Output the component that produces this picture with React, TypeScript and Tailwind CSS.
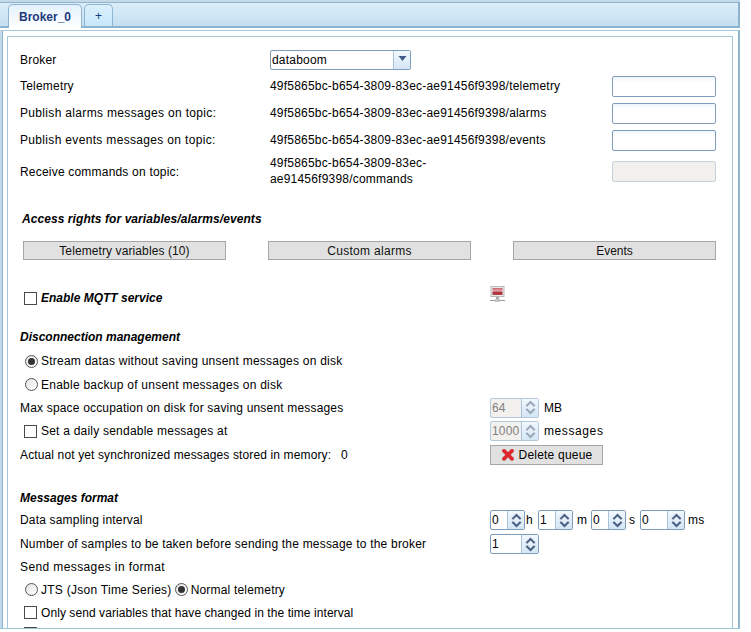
import React from "react";

const font = "font-['Liberation_Sans',Arial,sans-serif]";

function Row({ h, mt = "", children }: { h: string; mt?: string; children: React.ReactNode }) {
  return <div className={`flex items-center ${h} ${mt}`}>{children}</div>;
}

function Check() {
  return <span className="inline-block w-[13px] h-[13px] shrink-0 border border-[#4a4a4a] bg-white" />;
}

function Radio({ on }: { on?: boolean }) {
  return (
    <span className="flex items-center justify-center w-[13px] h-[13px] shrink-0 rounded-full border border-[#555] bg-gradient-to-br from-[#e4e4e4] to-white">
      {on && <span className="block w-[7px] h-[7px] rounded-full bg-[#333]" />}
    </span>
  );
}

function Arrows({ disabled }: { disabled?: boolean }) {
  const c = disabled ? "#9aa8ba" : "#4d6185";
  return (
    <svg width="11" height="15" viewBox="0 0 11 15">
      <path d="M5.5 0.5 L10.5 5.5 L8.8 6.8 L5.5 3.6 L2.2 6.8 L0.5 5.5 Z" fill={c} />
      <path d="M5.5 14.5 L10.5 9.5 L8.8 8.2 L5.5 11.4 L2.2 8.2 L0.5 9.5 Z" fill={c} />
    </svg>
  );
}

function Spinner({ value, w, disabled }: { value: string; w: string; disabled?: boolean }) {
  return (
    <span
      className={`flex h-[20px] ${w} rounded-[2px] border ${
        disabled ? "border-[#b4c8dc] bg-[#f3f1ee] text-[#808080]" : "border-[#7f9db9] bg-white text-black"
      }`}
    >
      <span className="flex-1 pl-[1px] leading-[18px] overflow-hidden">{value}</span>
      <span className="flex items-center justify-center w-[17px] border-l border-[#a9c3dc] bg-gradient-to-b from-[#f2f8fd] to-[#d4e6f5]">
        <Arrows disabled={disabled} />
      </span>
    </span>
  );
}

function TextBox({ disabled }: { disabled?: boolean }) {
  return (
    <span
      className={`block w-[104px] h-[21px] rounded-[2px] border ${
        disabled ? "border-[#c5d3de] bg-[#f2f0ed]" : "border-[#7f9db9] bg-gradient-to-b from-[#eef7ff] to-white to-30%"
      }`}
    />
  );
}

function GreyButton({ label, tracking }: { label: string; tracking: string }) {
  return (
    <button className={`w-[203px] h-[19px] border border-[#a6a6a6] bg-[#e1e1e1] text-[12px] leading-[16px] text-[#111] ${tracking}`}>
      {label}
    </button>
  );
}

function TopicRow({ h, label, topic, tracking = "" }: { h: string; label: string; topic: string; tracking?: string }) {
  return (
    <Row h={h}>
      <span className={`w-[250px] mb-[2px] ${tracking}`}>{label}</span>
      <span className="w-[342px] mb-[2px]">{topic}</span>
      <TextBox />
    </Row>
  );
}

function Heading({ children }: { children: React.ReactNode }) {
  return <span className="font-bold italic tracking-normal">{children}</span>;
}

export default function App() {
  return (
    <div className={`${font} w-[751px] h-[632px] overflow-hidden bg-white text-[12px] tracking-[0.2px] text-black`}>
      <div className="h-[629px] w-[740px] flex flex-col border-b border-[#9cc6d8]">
        {/* Tab strip */}
        <div className="h-[2px] bg-[#c3d9e7]" />
        <div className="flex items-end h-[26px] pl-[8px] gap-[2px] border-t border-[#8fb4d0] border-b-[2px] border-b-[#8db3cf] border-r-[2px] border-r-[#8fb4d0] bg-gradient-to-b from-[#dcedf8] to-[#c4e0f3]">
          <div className="flex items-center justify-center w-[74px] h-[24px] -mb-[2px] rounded-t-[5px] border border-b-0 border-[#8fb4d0] bg-gradient-to-b from-[#e3f1fb] to-white font-bold tracking-normal text-[#1c3a7a]">
            Broker_0
          </div>
          <div className="flex items-center justify-center w-[29px] h-[22px] rounded-t-[5px] border border-b-0 border-[#8fb4d0] bg-gradient-to-b from-[#dcf0fc] to-[#c6e8fb] text-[#1c3a7a]">
            +
          </div>
        </div>

        {/* Tab body */}
        <div className="flex-1 min-h-0 mt-[2px] border-l-[2px] border-l-[#c3d9e7]">
          <div className="h-full border-l border-l-[#8fb4d0] border-r-[2px] border-r-[#8fb4d0] border-t border-t-[#a6c9da] pl-[4px] pt-[5px]">
            <div className="h-full w-[726px] overflow-hidden border border-b-0 border-[#a6c9da] pl-[12px] pt-[10px]">
              <Row h="h-[26px]">
                <span className="w-[250px]">Broker</span>
                <span className="flex w-[141px] h-[20px] rounded-[2px] border border-[#7f9db9]">
                  <span className="flex-1 pl-[1px] leading-[18px]">databoom</span>
                  <span className="flex items-center justify-center w-[17px] border-l border-[#a9c3dc] bg-gradient-to-b from-[#f2f8fd] to-[#d4e6f5]">
                    <svg width="9" height="5" viewBox="0 0 9 5" className="-mt-[3px]">
                      <path d="M0.5 0 H8.5 L4.5 5 Z" fill="#3f5a86" />
                    </svg>
                  </span>
                </span>
              </Row>
              <TopicRow h="h-[27px]" label="Telemetry" topic="49f5865bc-b654-3809-83ec-ae91456f9398/telemetry" />
              <TopicRow h="h-[27px]" label="Publish alarms messages on topic:" topic="49f5865bc-b654-3809-83ec-ae91456f9398/alarms" tracking="tracking-[0.33px]" />
              <TopicRow h="h-[27px]" label="Publish events messages on topic:" topic="49f5865bc-b654-3809-83ec-ae91456f9398/events" tracking="tracking-[0.33px]" />
              <Row h="h-[36px]">
                <span className="w-[250px]">Receive commands on topic:</span>
                <span className="w-[342px] leading-[16px] mb-[2px]">
                  49f5865bc-b654-3809-83ec-
                  <br />
                  ae91456f9398/commands
                </span>
                <span className="mb-[2px]">
                  <TextBox disabled />
                </span>
              </Row>

              <Row h="h-[20px]" mt="mt-[19px]">
                <span className="pl-[2px] tracking-[0.07px] font-bold italic">Access rights for variables/alarms/events</span>
              </Row>
              <div className="flex gap-[42px] mt-[12px] pl-[3px]">
                <GreyButton label="Telemetry variables (10)" tracking="tracking-[0.1px]" />
                <GreyButton label="Custom alarms" tracking="tracking-[0.3px]" />
                <GreyButton label="Events" tracking="tracking-normal" />
              </div>

              <Row h="h-[20px]" mt="mt-[28px]">
                <span className="flex items-center gap-[4px] w-[470px] pl-[4px]">
                  <Check />
                  <Heading>Enable MQTT service</Heading>
                </span>
                <svg width="16" height="17" viewBox="0 0 16 17" className="-mt-[7px]">
                  <defs>
                    <linearGradient id="screen" x1="0" y1="0" x2="0" y2="1">
                      <stop offset="0" stopColor="#c9636b" />
                      <stop offset="0.45" stopColor="#e7a6aa" />
                      <stop offset="0.6" stopColor="#a8303a" />
                      <stop offset="1" stopColor="#b8434c" />
                    </linearGradient>
                  </defs>
                  <rect x="1" y="0.5" width="13" height="10" fill="#e9e9e9" stroke="#b9b9b9" />
                  <rect x="2.5" y="2" width="10" height="7" fill="url(#screen)" />
                  <rect x="6" y="11" width="3" height="3" fill="#a8a8a8" />
                  <rect x="0" y="14" width="15" height="1" fill="#9a9a9a" />
                  <rect x="5" y="13" width="5" height="3" fill="#c4c4c4" />
                </svg>
              </Row>

              <Row h="h-[20px]" mt="mt-[19px]">
                <Heading>Disconnection management</Heading>
              </Row>
              <Row h="h-[24px]" mt="mt-[2px]">
                <span className="flex items-center gap-[3px] pl-[5px] tracking-[0.235px]">
                  <Radio on />
                  Stream datas without saving unsent messages on disk
                </span>
              </Row>
              <Row h="h-[23px]">
                <span className="flex items-center gap-[3px] pl-[5px] tracking-[0.25px]">
                  <Radio />
                  Enable backup of unsent messages on disk
                </span>
              </Row>
              <Row h="h-[23px]">
                <span className="w-[470px] tracking-[0.18px]">Max space occupation on disk for saving unsent messages</span>
                <Spinner value="64" w="w-[49px]" disabled />
                <span className="ml-[5px] tracking-normal">MB</span>
              </Row>
              <Row h="h-[24px]">
                <span className="flex items-center gap-[4px] w-[470px] pl-[4px] tracking-[0.22px]">
                  <Check />
                  Set a daily sendable messages at
                </span>
                <Spinner value="1000" w="w-[49px]" disabled />
                <span className="ml-[5px] tracking-[0.6px]">messages</span>
              </Row>
              <Row h="h-[24px]">
                <span className="w-[321px] tracking-[0.13px]">Actual not yet synchronized messages stored in memory:</span>
                <span className="w-[149px]">0</span>
                <button className="flex items-center justify-center gap-[4px] w-[113px] h-[20px] border border-[#a6a6a6] bg-[#e1e1e1] text-[12px]">
                  <svg width="14" height="14" viewBox="0 0 14 14">
                    <path d="M3 3 L11 11 M11 3 L3 11" stroke="#9a5a5a" strokeWidth="4" strokeLinecap="round" opacity="0.5" />
                    <path d="M3 2.7 L11 10.7 M11 2.7 L3 10.7" stroke="#e0272d" strokeWidth="3.4" strokeLinecap="round" />
                  </svg>
                  Delete queue
                </button>
              </Row>

              <Row h="h-[20px]" mt="mt-[21px]">
                <Heading>Messages format</Heading>
              </Row>
              <Row h="h-[24px]">
                <span className="w-[470px] tracking-[0.18px]">Data sampling interval</span>
                <Spinner value="0" w="w-[35px]" />
                <span className="ml-[1px] w-[12px]">h</span>
                <Spinner value="1" w="w-[35px]" />
                <span className="ml-[4px] w-[14px]">m</span>
                <Spinner value="0" w="w-[35px]" />
                <span className="ml-[3px] w-[11px]">s</span>
                <Spinner value="0" w="w-[45px]" />
                <span className="ml-[3px]">ms</span>
              </Row>
              <Row h="h-[24px]">
                <span className="w-[470px]">Number of samples to be taken before sending the message to the broker</span>
                <Spinner value="1" w="w-[49px]" />
              </Row>
              <Row h="h-[22px]">
                <span className="tracking-[0.39px]">Send messages in format</span>
              </Row>
              <Row h="h-[23px]">
                <span className="flex items-center gap-[3px] pl-[5px]">
                  <Radio />
                  <span className="tracking-[0.27px]">JTS (Json Time Series)</span>
                  <Radio on />
                  <span className="tracking-[0.19px]">Normal telemetry</span>
                </span>
              </Row>
              <Row h="h-[23px]">
                <span className="flex items-center gap-[4px] pl-[4px] tracking-[0.07px]">
                  <Check />
                  Only send variables that have changed in the time interval
                </span>
              </Row>
              <Row h="h-[19px]">
                <span className="flex items-center pl-[4px]">
                  <Check />
                </span>
              </Row>
            </div>
          </div>
        </div>
      </div>
    </div>
  );
}
